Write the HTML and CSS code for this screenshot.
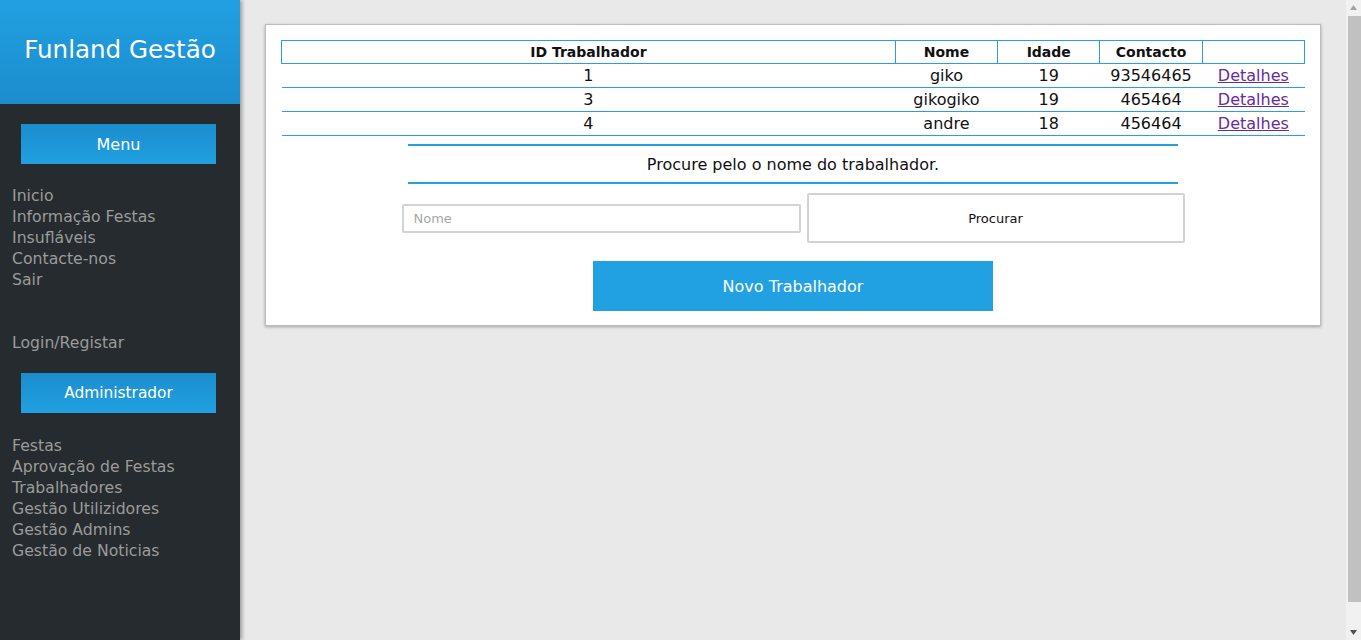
FILE: index.html
```html
<!DOCTYPE html>
<html lang="pt">
<head>
<meta charset="utf-8">
<title>Funland Gestão</title>
<link rel="stylesheet" href="styles.css">
</head>
<body>
<div class="layout">
  <aside class="sidebar">
    <header class="brand">Funland Gestão</header>
    <div class="section-btn">Menu</div>
    <nav class="links">
      <a href="#">Inicio</a>
      <a href="#">Informação Festas</a>
      <a href="#">Insufláveis</a>
      <a href="#">Contacte-nos</a>
      <a href="#">Sair</a>
    </nav>
    <nav class="links login">
      <a href="#">Login/Registar</a>
    </nav>
    <div class="section-btn admin-btn">Administrador</div>
    <nav class="links admin">
      <a href="#">Festas</a>
      <a href="#">Aprovação de Festas</a>
      <a href="#">Trabalhadores</a>
      <a href="#">Gestão Utilizidores</a>
      <a href="#">Gestão Admins</a>
      <a href="#">Gestão de Noticias</a>
    </nav>
  </aside>
  <main class="main">
    <section class="card">
      <table class="grid">
        <thead>
          <tr><th class="c-id">ID Trabalhador</th><th>Nome</th><th>Idade</th><th>Contacto</th><th></th></tr>
        </thead>
        <tbody>
          <tr><td>1</td><td>giko</td><td>19</td><td>93546465</td><td><a class="visited" href="#">Detalhes</a></td></tr>
          <tr><td>3</td><td>gikogiko</td><td>19</td><td>465464</td><td><a class="visited" href="#">Detalhes</a></td></tr>
          <tr><td>4</td><td>andre</td><td>18</td><td>456464</td><td><a class="visited" href="#">Detalhes</a></td></tr>
        </tbody>
      </table>
      <div class="search-title">Procure pelo o nome do trabalhador.</div>
      <form class="search">
        <input class="search-input" type="text" placeholder="Nome">
        <button class="search-btn" type="button">Procurar</button>
      </form>
      <div class="new-row"><button class="new-btn" type="button">Novo Trabalhador</button></div>
    </section>
  </main>
  <div class="scrollbar" aria-hidden="true">
    <svg class="arrow" width="15" height="15" viewBox="0 0 15 15"><path d="M4 10 H11 L7.5 5 Z" fill="#a3a3a3"/></svg>
    <div class="thumb-track"><div class="thumb"></div></div>
    <svg class="arrow" width="15" height="15" viewBox="0 0 15 15"><path d="M4 5 H11 L7.5 10 Z" fill="#505050"/></svg>
  </div>
</div>
</body>
</html>
```
FILE: styles.css
```css
html, body {
  margin: 0;
  padding: 0;
}
body {
  background: #e9e9e9;
  font-family: "DejaVu Sans", sans-serif;
  font-size: 16px;
}
.layout {
  display: flex;
  height: 640px;
  overflow: hidden;
}
.sidebar {
  width: 240px;
  flex: none;
  background: #252b2e;
  box-shadow: 2px 0 4px rgba(0,0,0,0.35);
  display: flex;
  flex-direction: column;
  position: relative;
  z-index: 1;
}
.brand {
  height: 104px;
  background: linear-gradient(#21a0e1, #1b8dcd);
  color: #fff;
  font-size: 24.6px;
  display: flex;
  align-items: center;
  justify-content: center;
  padding-bottom: 6px;
  box-sizing: border-box;
}
.section-btn {
  margin: 20px 24px 0 21px;
  height: 40px;
  background: linear-gradient(#1b8dcd, #21a0e1);
  color: #fff;
  font-size: 16px;
  display: flex;
  align-items: center;
  justify-content: center;
}
.section-btn.admin-btn {
  font-size: 15.4px;
}
.links {
  display: flex;
  flex-direction: column;
  padding: 21px 12px 0;
}
.links a {
  color: #9b9b9b;
  text-decoration: none;
  line-height: 21px;
  font-size: 15.7px;
}
.links.login {
  padding-top: 42px;
}
.links.admin {
  padding-top: 22px;
}
.main {
  flex: 1;
  padding: 24px 25px 0 25px;
}
.card {
  background: #fff;
  border: 1px solid #bdbdbd;
  box-shadow: 0 1px 3px rgba(0,0,0,0.3);
  padding: 15px 15px 14px;
}
.grid {
  width: 100%;
  border-collapse: collapse;
  color: #111;
}
.grid th {
  border: 1px solid #2a9fdc;
  height: 22px;
  padding: 0;
  font-size: 14px;
  font-weight: bold;
  width: 10%;
}
.grid th.c-id {
  width: 60%;
}
.grid td {
  border-top: 1px solid #2a9fdc;
  border-bottom: 1px solid #2a9fdc;
  height: 23px;
  padding: 0;
  text-align: center;
  font-size: 16px;
}
.grid a.visited {
  color: #6a2b9a;
}
.search-title {
  width: 770px;
  margin: 8px auto 0;
  border-top: 2px solid #22a1e2;
  border-bottom: 2px solid #22a1e2;
  height: 36px;
  display: flex;
  align-items: center;
  justify-content: center;
  font-size: 16px;
  color: #111;
}
.search {
  display: flex;
  justify-content: center;
  align-items: center;
  gap: 6px;
  margin: 9px 0 0;
}
.search-input {
  width: 399px;
  height: 29px;
  box-sizing: border-box;
  border: 2px solid #d3d3d3;
  border-radius: 2px;
  padding: 0 10px;
  font-family: inherit;
  font-size: 13px;
  margin: 0;
}
.search-input::placeholder {
  color: #a8a8a8;
}
.search-btn {
  width: 378px;
  height: 50px;
  box-sizing: border-box;
  background: #fff;
  border: 2px solid #d3d3d3;
  border-radius: 2px;
  font-family: inherit;
  font-size: 13px;
  color: #111;
  margin: 0;
}
.new-row {
  display: flex;
  justify-content: center;
  margin-top: 18px;
}
.new-btn {
  width: 400px;
  height: 50px;
  border: none;
  background: #22a1e2;
  color: #fff;
  font-family: inherit;
  font-size: 16px;
}
.scrollbar {
  width: 15px;
  flex: none;
  background: #f1f1f1;
  display: flex;
  flex-direction: column;
}
.arrow {
  display: block;
  flex: none;
}
.thumb-track {
  flex: 1;
  display: flex;
  flex-direction: column;
  padding: 1px 0 23px 2px;
}
.thumb {
  height: 586px;
  background: #c1c1c1;
}
```
